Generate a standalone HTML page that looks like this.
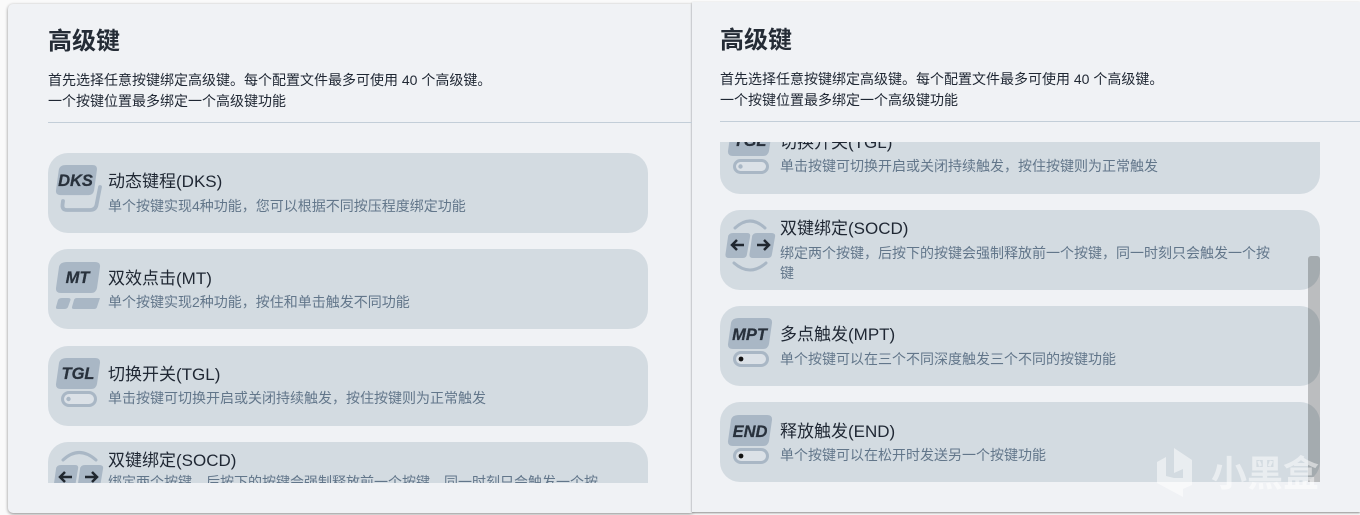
<!DOCTYPE html>
<html lang="zh"><head><meta charset="utf-8"><title>高级键</title>
<style>
*{box-sizing:border-box;margin:0;padding:0}
html,body{width:1360px;height:515px;overflow:hidden;background:#fafafa}
body{position:relative;font-family:"Liberation Sans","Noto Sans CJK SC",sans-serif;color:#1f2733}
.panel{position:absolute;background:#f0f2f5}
.p1{left:8px;top:4px;width:684px;height:509px;border-radius:5px 0 0 5px;box-shadow:0 1px 3px rgba(0,0,0,.45)}
.p2{left:692px;top:2px;width:668px;height:510px;box-shadow:0 1px 2px rgba(0,0,0,.45)}
.abs{position:absolute;white-space:nowrap}
h1{position:absolute;font-size:24px;line-height:32px;font-weight:700;color:#252c36;white-space:nowrap}
.t{position:absolute;font-size:14px;line-height:21px;color:#1f2733;white-space:nowrap}
.rule{position:absolute;height:1px;background:#c3ced8}
.clip{position:absolute;overflow:hidden}
.card{position:absolute;left:0;width:600px;height:80px;background:#d3dbe1;border-radius:20px}
.card svg{position:absolute;left:0;top:0}
.name{position:absolute;left:60px;top:18px;font-size:17px;line-height:22px;color:#1f2733;white-space:nowrap}
.desc{position:absolute;left:60px;top:43px;font-size:14px;line-height:20px;color:#62768a;white-space:nowrap}
.k{font:italic 700 16.5px "Liberation Sans",sans-serif;fill:#28313c;stroke:#28313c;stroke-width:.25;text-anchor:middle}
.key{fill:#a9b7c5}
.wm{position:absolute;left:1211px;top:449px;font-size:36px;line-height:50px;font-weight:700;color:rgba(255,255,255,.5);white-space:nowrap}
</style></head><body>
<div class="panel p1"></div>
<div class="panel p2"></div>

<h1 style="left:48px;top:26px">高级键</h1>
<div class="t" style="left:48px;top:70px">首先选择任意按键绑定高级键。每个配置文件最多可使用 40 个高级键。</div>
<div class="t" style="left:48px;top:91px">一个按键位置最多绑定一个高级键功能</div>
<div class="rule" style="left:48px;top:122px;width:644px"></div>

<div class="clip" style="left:48px;top:142px;width:600px;height:341px">
 <div class="card" style="top:11px">
  <svg width="60" height="80"><path class="key" transform="translate(8 12) scale(.93 .97)" d="M11 0 H39 Q44.500 0 44 5 L41 26 Q40 31 35 31 H5 Q-.5 31 0 26 L3 5 Q4 0 11 0 Z"/><path d="M52 34 L48.500 52 Q47.500 57 42 57 H19 Q14 57 14.500 52 L15 48" fill="none" stroke="#a9b7c5" stroke-width="3.800" stroke-linecap="round"/><text class="k" x="27.500" y="33">DKS</text></svg>
  <div class="name">动态键程(DKS)</div><div class="desc">单个按键实现4种功能，您可以根据不同按压程度绑定功能</div>
 </div>
 <div class="card" style="top:107px">
  <svg width="60" height="80"><path class="key" transform="translate(8 13)" d="M11 0 H39 Q44.500 0 44 5 L41 26 Q40 31 35 31 H5 Q-.5 31 0 26 L3 5 Q4 0 11 0 Z"/><path class="key" d="M14 49 H20 Q23 49 22.500 51 L20 58 Q19 60 16.500 60 H10 Q7.500 60 8 58 L10 51 Q11 49 14 49 Z M29 49 H52 L49 58 Q48.500 60 46 60 H26 Q23.500 60 24 58 L26 51 Q26.500 49 29 49 Z"/><text class="k" x="29.500" y="34">MT</text></svg>
  <div class="name" style="top:19px">双效点击(MT)</div><div class="desc">单个按键实现2种功能，按住和单击触发不同功能</div>
 </div>
 <div class="card" style="top:204px">
  <svg width="60" height="80"><path class="key" transform="translate(8 12)" d="M11 0 H39 Q44.500 0 44 5 L41 26 Q40 31 35 31 H5 Q-.5 31 0 26 L3 5 Q4 0 11 0 Z"/><rect x="14.500" y="46.500" width="33" height="13" rx="6.500" fill="#dbe1e7" stroke="#a9b7c5" stroke-width="3"/><circle cx="20.500" cy="53" r="2.200" fill="#a9b7c5"/><text class="k" x="30" y="33">TGL</text></svg>
  <div class="name" style="top:18px">切换开关(TGL)</div><div class="desc" style="top:42px">单击按键可切换开启或关闭持续触发，按住按键则为正常触发</div>
 </div>
 <div class="card" style="top:300px">
  <svg width="60" height="80"><path d="M15 18 Q31 3 48 18" fill="none" stroke="#a9b7c5" stroke-width="3" stroke-linecap="round"/><path class="key" d="M13 23 H27 Q31 23 30 27 L27 45 Q26.500 49 23 49 H9 Q5 49 5.500 45 L8 27 Q8.500 23 13 23 Z M37 23 H51 Q56 23 55 27 L52 45 Q51.500 49 48 49 H33 Q29 49 29.500 45 L32 27 Q32.500 23 37 23 Z"/><path d="M24 35 H12 M17 30 L12 35 L17 40 M37 35 H49 M44 30 L49 35 L44 40" fill="none" stroke="#20272f" stroke-width="2.500"/></svg>
  <div class="name" style="top:8px">双键绑定(SOCD)</div><div class="desc" style="top:30px">绑定两个按键，后按下的按键会强制释放前一个按键，同一时刻只会触发一个按</div>
 </div>
</div>

<h1 style="left:720px;top:25px">高级键</h1>
<div class="t" style="left:720px;top:69px">首先选择任意按键绑定高级键。每个配置文件最多可使用 40 个高级键。</div>
<div class="t" style="left:720px;top:90px">一个按键位置最多绑定一个高级键功能</div>
<div class="rule" style="left:720px;top:121px;width:640px"></div>

<div class="clip" style="left:720px;top:142px;width:600px;height:350px">
 <div class="card" style="top:-28px">
  <svg width="60" height="80"><path class="key" transform="translate(8 11)" d="M11 0 H39 Q44.500 0 44 5 L41 26 Q40 31 35 31 H5 Q-.5 31 0 26 L3 5 Q4 0 11 0 Z"/><rect x="14.500" y="46.500" width="33" height="12" rx="6" fill="#dbe1e7" stroke="#a9b7c5" stroke-width="3"/><circle cx="20.500" cy="52.500" r="2.200" fill="#a9b7c5"/><text class="k" x="30" y="32">TGL</text></svg>
  <div class="name">切换开关(TGL)</div><div class="desc" style="top:42px">单击按键可切换开启或关闭持续触发，按住按键则为正常触发</div>
 </div>
 <div class="card" style="top:68px">
  <svg width="60" height="80"><path d="M15 18 Q30 4 45 18 M14 53 Q30 67 46 53" fill="none" stroke="#a9b7c5" stroke-width="3" stroke-linecap="round"/><path class="key" d="M13 23 H27 Q31 23 30 27 L27 44 Q26.500 48 23 48 H9 Q5 48 5.500 44 L8 27 Q8.500 23 13 23 Z M37 23 H51 Q56 23 55 27 L52 44 Q51.500 48 48 48 H33 Q29 48 29.500 44 L32 27 Q32.500 23 37 23 Z"/><path d="M24 35 H12 M17 30 L12 35 L17 40 M37 35 H49 M44 30 L49 35 L44 40" fill="none" stroke="#20272f" stroke-width="2.500"/></svg>
  <div class="name" style="top:8px">双键绑定(SOCD)</div><div class="desc" style="top:33px">绑定两个按键，后按下的按键会强制释放前一个按键，同一时刻只会触发一个按<br>键</div>
 </div>
 <div class="card" style="top:164px">
  <svg width="60" height="80"><path class="key" transform="translate(8 12)" d="M11 0 H39 Q44.500 0 44 5 L41 26 Q40 31 35 31 H5 Q-.5 31 0 26 L3 5 Q4 0 11 0 Z"/><rect x="14.500" y="46.500" width="33" height="13" rx="6.500" fill="#dbe1e7" stroke="#a9b7c5" stroke-width="3"/><circle cx="21" cy="53" r="2.400" fill="#111"/><text class="k" x="29.500" y="34">MPT</text></svg>
  <div class="name">多点触发(MPT)</div><div class="desc">单个按键可以在三个不同深度触发三个不同的按键功能</div>
 </div>
 <div class="card" style="top:260px">
  <svg width="60" height="80"><path class="key" transform="translate(8 13)" d="M11 0 H39 Q44.500 0 44 5 L41 26 Q40 31 35 31 H5 Q-.5 31 0 26 L3 5 Q4 0 11 0 Z"/><rect x="14.500" y="47.500" width="33" height="13" rx="6.500" fill="#dbe1e7" stroke="#a9b7c5" stroke-width="3"/><circle cx="21" cy="54" r="2.400" fill="#111"/><text class="k" x="30" y="35">END</text></svg>
  <div class="name" style="top:19px">释放触发(END)</div><div class="desc">单个按键可以在松开时发送另一个按键功能</div>
 </div>
</div>

<div class="abs" style="left:1308px;top:256px;width:12px;height:226px;background:rgba(0,0,0,.22);border-radius:3px 3px 0 0"></div>

<svg class="abs" style="left:1150px;top:442px" width="60" height="62" viewBox="0 0 60 62"><path d="M24 6 L42 18 V43 L33 47 V27 L24 31 Z M7 20 L16 15 V34 L24 36 H33 V55 L7 41 Z" fill="rgba(255,255,255,.5)"/></svg>
<div class="wm">小黑盒</div>
</body></html>
